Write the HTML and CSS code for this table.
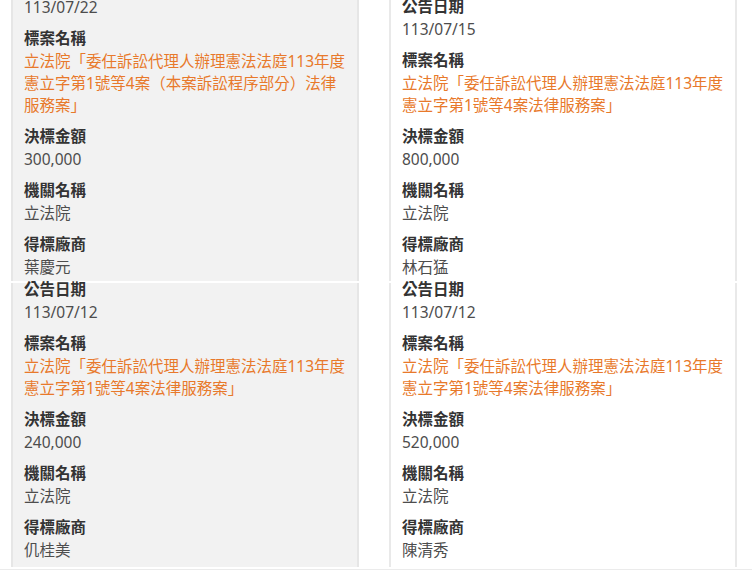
FILE: index.html
```html
<!DOCTYPE html>
<html lang="zh-Hant">
<head>
<meta charset="utf-8">
<title>決標公告</title>
<link rel="stylesheet" href="styles.css">
</head>
<body>
<div class="list">
  <div class="card card-alt">
    <div class="fields">
      <div class="field"><div class="label">公告日期</div><div class="value">113/07/22</div></div>
      <div class="field"><div class="label">標案名稱</div><div class="value link">立法院「委任訴訟代理人辦理憲法法庭113年度憲立字第1號等4案（本案訴訟程序部分）法律服務案」</div></div>
      <div class="field"><div class="label">決標金額</div><div class="value">300,000</div></div>
      <div class="field"><div class="label">機關名稱</div><div class="value">立法院</div></div>
      <div class="field"><div class="label">得標廠商</div><div class="value">葉慶元</div></div>
    </div>
  </div>
  <div class="card">
    <div class="fields">
      <div class="field"><div class="label">公告日期</div><div class="value">113/07/15</div></div>
      <div class="field"><div class="label">標案名稱</div><div class="value link">立法院「委任訴訟代理人辦理憲法法庭113年度憲立字第1號等4案法律服務案」</div></div>
      <div class="field"><div class="label">決標金額</div><div class="value">800,000</div></div>
      <div class="field"><div class="label">機關名稱</div><div class="value">立法院</div></div>
      <div class="field"><div class="label">得標廠商</div><div class="value">林石猛</div></div>
    </div>
  </div>
  <div class="card card-alt card-end">
    <div class="fields">
      <div class="field"><div class="label">公告日期</div><div class="value">113/07/12</div></div>
      <div class="field"><div class="label">標案名稱</div><div class="value link">立法院「委任訴訟代理人辦理憲法法庭113年度憲立字第1號等4案法律服務案」</div></div>
      <div class="field"><div class="label">決標金額</div><div class="value">240,000</div></div>
      <div class="field"><div class="label">機關名稱</div><div class="value">立法院</div></div>
      <div class="field"><div class="label">得標廠商</div><div class="value">仉桂美</div></div>
    </div>
  </div>
  <div class="card card-end">
    <div class="fields">
      <div class="field"><div class="label">公告日期</div><div class="value">113/07/12</div></div>
      <div class="field"><div class="label">標案名稱</div><div class="value link">立法院「委任訴訟代理人辦理憲法法庭113年度憲立字第1號等4案法律服務案」</div></div>
      <div class="field"><div class="label">決標金額</div><div class="value">520,000</div></div>
      <div class="field"><div class="label">機關名稱</div><div class="value">立法院</div></div>
      <div class="field"><div class="label">得標廠商</div><div class="value">陳清秀</div></div>
    </div>
  </div>
</div>
</body>
</html>
```
FILE: styles.css
```css
html, body {
  margin: 0;
  padding: 0;
  background: #ffffff;
}
body {
  font-family: "Noto Sans", "Noto Sans CJK TC", sans-serif;
  overflow: hidden;
}
.list {
  margin-top: -22px;
  padding: 0 15px 2px 11px;
  display: grid;
  grid-template-columns: 1fr 1fr;
  column-gap: 30px;
  row-gap: 2px;
  border-bottom: 2px solid #ebebeb;
}
.card {
  display: flex;
  flex-direction: column;
  justify-content: flex-end;
  background: #ffffff;
  border-left: 2px solid #e9e9e9;
  border-right: 2px solid #e9e9e9;
  padding: 0 10px 3px 11px;
}
.card-alt {
  background: #f2f2f2;
  border-color: #e6e6e6;
}
.card-end {
  padding-bottom: 6px;
}
.fields {
  display: flex;
  flex-direction: column;
  gap: 9px;
  margin-top: -5px;
}
.label {
  font-size: 15.5px;
  line-height: 23px;
  font-weight: 700;
  color: #333333;
}
.value {
  font-size: 15.5px;
  line-height: 22px;
  color: #4d4d4d;
}
.link {
  color: #e8792b;
}
```
